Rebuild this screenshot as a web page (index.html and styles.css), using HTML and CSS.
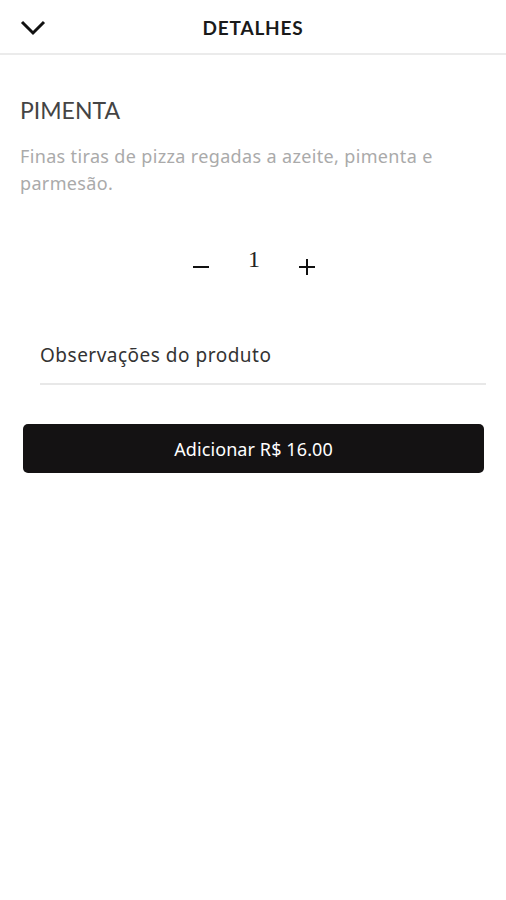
FILE: index.html
```html
<!DOCTYPE html>
<html lang="pt-BR">
  <head>
    <meta charset="UTF-8" />
    <meta name="viewport" content="width=device-width, initial-scale=1.0" />
    <title>Detalhes</title>
    <link rel="stylesheet" href="styles.css">
  </head>
  <body>
    <div class="header">
      <button class="back-btn" aria-label="Voltar">
        <svg width="26" height="16" viewBox="0 0 26 16">
          <polyline points="2,2 13,13 24,2" fill="none" stroke="#111" stroke-width="3" />
        </svg>
      </button>
      <div class="header-title">DETALHES</div>
    </div>

    <div class="content">
      <h1 class="product-name">PIMENTA</h1>
      <p class="product-desc">Finas tiras de pizza regadas a azeite, pimenta e parmesão.</p>

      <div class="stepper">
        <button class="step-btn" aria-label="Diminuir">
          <svg width="18" height="18" viewBox="0 0 18 18">
            <line x1="1" y1="9" x2="17" y2="9" stroke="#111" stroke-width="2" />
          </svg>
        </button>
        <span class="qty">1</span>
        <button class="step-btn" aria-label="Aumentar">
          <svg width="18" height="18" viewBox="0 0 18 18">
            <line x1="1" y1="9" x2="17" y2="9" stroke="#111" stroke-width="2" />
            <line x1="9" y1="1" x2="9" y2="17" stroke="#111" stroke-width="2" />
          </svg>
        </button>
      </div>

      <div class="obs">
        <input class="obs-input" type="text" placeholder="Observações do produto" />
      </div>

      <button class="add-btn">Adicionar R$ 16.00</button>
    </div>
  </body>
</html>
```

FILE: styles.css
```css
* {
  padding: 0;
  margin: 0;
  box-sizing: border-box;
}
html,
body {
  width: 100%;
  height: 100%;
  background-color: #fff;
  font-family: "Noto Sans", "Open Sans", sans-serif;
}
button {
  border: none;
  background: none;
  cursor: pointer;
  font-family: inherit;
}
.header {
  position: relative;
  display: flex;
  align-items: center;
  justify-content: center;
  height: 55px;
  border-bottom: 2px solid #ebebeb;
}
.back-btn {
  position: absolute;
  left: 20px;
  top: 20px;
  display: flex;
}
.header-title {
  font-family: "Lato", sans-serif;
  font-size: 19px;
  font-weight: 700;
  color: #1a1a1a;
  letter-spacing: 0.8px;
  margin-top: 2px;
}
.content {
  padding: 40px 20px 0 20px;
}
.product-name {
  font-family: "Lato", sans-serif;
  font-size: 23px;
  font-weight: 400;
  color: #444;
  line-height: 30px;
}
.product-desc {
  margin-top: 18px;
  font-size: 18px;
  line-height: 27px;
  letter-spacing: 0.35px;
  color: #aaa;
}
.stepper {
  display: flex;
  align-items: center;
  justify-content: center;
  gap: 36px;
  margin-top: 45px;
  margin-left: 2px;
}
.step-btn {
  display: flex;
  margin-top: 16px;
}
.qty {
  font-family: "Liberation Serif", serif;
  font-size: 24px;
  color: #222;
  padding: 0 2px;
}
.obs {
  margin: 56px 0 0 20px;
}
.obs-input {
  width: 100%;
  border: none;
  border-bottom: 2px solid #e8e8e8;
  outline: none;
  font-family: inherit;
  font-size: 19px;
  letter-spacing: 0.5px;
  padding: 10px 0 15px 0;
  color: #333;
}
.obs-input::placeholder {
  color: #333;
}
.add-btn {
  display: block;
  width: calc(100% - 5px);
  margin: 39px 0 0 3px;
  height: 49px;
  background-color: #141213;
  border-radius: 5px;
  color: #fff;
  font-size: 18px;
  letter-spacing: 0.1px;
}
```
